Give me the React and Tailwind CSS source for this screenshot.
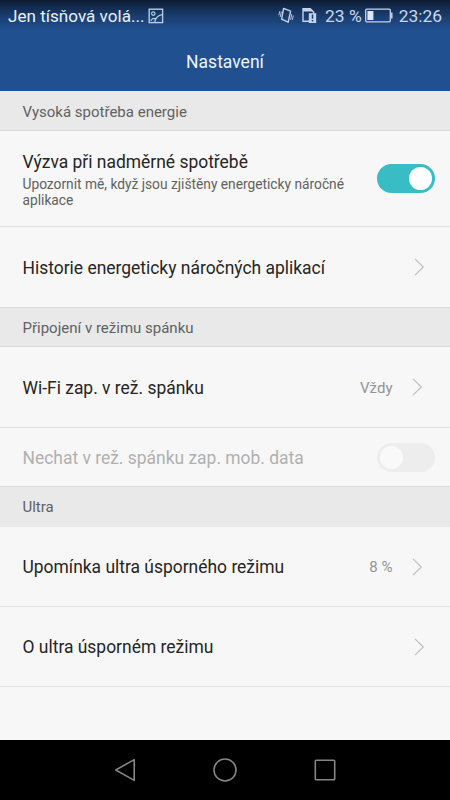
import { useState } from "react";

function Chevron() {
  return (
    <svg width="12" height="20" viewBox="0 0 12 20" fill="none" stroke="#bcbcbc" strokeWidth="1.1">
      <path d="M1 1.8 L9.3 10 L1 18.2" />
    </svg>
  );
}

function Toggle({ on, disabled, onClick }) {
  return (
    <button
      onClick={onClick}
      disabled={disabled}
      className={"flex h-[29px] w-[58px] shrink-0 items-center rounded-full " +
        (on ? "justify-end bg-[#37bdc3] px-[3px]" : "justify-start bg-[#ededed] px-[3px]")}
    >
      <span className={"size-[23px] rounded-full " + (on ? "bg-white" : "bg-[#f9f9f9]")}></span>
    </button>
  );
}

function Section({ title, className }) {
  return (
    <div className={"flex shrink-0 items-center border-[#dadada] bg-[#e9e9e9] pl-[22.5px] text-[15px] text-[#616161] " + className}>
      {title}
    </div>
  );
}

// row that opens another screen
function LinkRow({ title, value, className }) {
  return (
    <div className={"flex shrink-0 items-center border-[#e1e1e1] pl-[22.5px] " + className}>
      <span className="flex-grow pt-[2px] text-[17.45px] text-[#252525]">{title}</span>
      {value && <span className="mr-[19.5px] pt-[2px] text-[15px] text-[#949494]">{value}</span>}
      <Chevron />
    </div>
  );
}

function StatusBar() {
  return (
    <div className="flex h-[32px] items-center pl-2 pr-[8px] text-[17.4px] text-[#e8f0fa]">
      <span className="w-[136px] whitespace-nowrap pt-[2px] text-[17.1px]">Jen tísňová volá...</span>
      <svg className="ml-[4px]" width="16" height="16" viewBox="0 0 16 16" fill="none" stroke="#b9cbe4" strokeWidth="1.4">
        <rect x="1.2" y="1.2" width="13.4" height="13.4" />
        <circle cx="5.3" cy="5.6" r="1.7" strokeWidth="1.2" />
        <path d="M3 12.8 C3.8 10.4 6 10 7.8 11 M6.8 14.2 C7.4 10 10 7.4 14.2 6.6" strokeWidth="1.3" />
      </svg>
      <div className="ml-auto flex items-center text-[#c9d8ec]">
        <svg width="16" height="17" viewBox="0 0 16 17" fill="none" stroke="#c3d3e9" strokeWidth="1.4">
          <path d="M5.6 1.4 L12.6 4.2 L10.2 15.2 L3.6 12.2 Z" strokeLinejoin="round" />
          <path d="M3.4 4.6 L2.2 10 M1.8 4.2 L0.8 8.4 M13.8 7.2 L12.6 12.8 M15.3 8.6 L14.4 12.8" strokeWidth="0.9" />
        </svg>
        <svg className="ml-[8px]" width="15" height="17" viewBox="0 0 15 17" fill="none">
          <path d="M7 14.2 H1 V1.8 H8.2 L11.6 5 V7" stroke="#c3d3e9" strokeWidth="1.4" />
          <path d="M1 1.2 H8.4 L11.6 4.6 H1 Z" fill="#c3d3e9" />
          <rect x="6.8" y="6.2" width="7.4" height="9.8" fill="#c3d3e9" />
          <path d="M10.5 7.6 V11.8 M10.5 13 V14.6" stroke="#1d4276" strokeWidth="1.5" />
        </svg>
        <span className="ml-[8px] whitespace-nowrap pt-px">23 %</span>
        <svg className="ml-[3px]" width="28" height="15" viewBox="0 0 28 15" fill="none">
          <rect x="0.7" y="1.2" width="24.6" height="12.6" rx="1" stroke="#c3d3e9" strokeWidth="1.3" />
          <rect x="2.4" y="3" width="6" height="9" fill="#dbe5f3" />
          <path d="M26.8 4.5 V10.5" stroke="#c3d3e9" strokeWidth="1.5" />
        </svg>
        <span className="ml-[6px] pt-px">23:26</span>
      </div>
    </div>
  );
}

function NavBar() {
  return (
    <div className="flex h-[60px] shrink-0 items-center justify-center gap-[76px] bg-black">
      <svg width="24" height="24" viewBox="0 0 24 24" fill="none" stroke="#858585" strokeWidth="1.6" strokeLinejoin="round">
        <path d="M2.8 12 L21.2 1.6 V22.4 Z" />
      </svg>
      <svg width="24" height="24" viewBox="0 0 24 24" fill="none" stroke="#858585" strokeWidth="1.6">
        <circle cx="12" cy="12" r="11" />
      </svg>
      <svg width="24" height="24" viewBox="0 0 24 24" fill="none" stroke="#858585" strokeWidth="1.6">
        <rect x="2.3" y="2.3" width="19.4" height="19.4" rx="0.8" />
      </svg>
    </div>
  );
}

export default function App() {
  const [warn, setWarn] = useState(true);

  return (
    <div className="flex h-[800px] w-[450px] flex-col overflow-hidden bg-[#f7f7f7] font-['Roboto',sans-serif]">
      <header className="h-[91px] shrink-0 bg-[linear-gradient(to_bottom,#0c1b30_0px,#12294a_6px,#1a3d6e_16px,#20508f_30px)]">
        <StatusBar />
        <h1 className="flex h-[59px] items-center justify-center pt-[2px] text-[17.5px] text-[#eef4fb]">Nastavení</h1>
      </header>

      <Section title="Vysoká spotřeba energie" className="h-[40px] border-b pt-[3px]" />
      <div className="flex h-[96px] shrink-0 items-center border-b border-[#e1e1e1] pl-[22.5px] pr-[15px]">
        <div className="flex-grow pt-px">
          <div className="mb-[2px] text-[17.45px] leading-[23px] text-[#252525]">Výzva při nadměrné spotřebě</div>
          <div className="w-[335px] text-[13.75px] leading-[16px] text-[#616161]">
            Upozornit mě, když jsou zjištěny energeticky náročné aplikace
          </div>
        </div>
        <Toggle on={warn} onClick={() => setWarn(!warn)} />
      </div>
      <LinkRow title="Historie energeticky náročných aplikací" className="h-[80px] pr-[24px]" />

      <Section title="Připojení v režimu spánku" className="h-[40px] border-y pt-[2px]" />
      <LinkRow title="Wi-Fi zap. v rež. spánku" value="Vždy" className="h-[81px] border-b pr-[26px]" />
      <div className="flex h-[58px] shrink-0 items-center pl-[22.5px] pr-[15px]">
        <span className="flex-grow pt-[2px] text-[17.45px] text-[#b0b0b0]">Nechat v rež. spánku zap. mob. data</span>
        <Toggle on={false} disabled />
      </div>

      <Section title="Ultra" className="h-[41px] border-t" />
      <LinkRow title="Upomínka ultra úsporného režimu" value="8 %" className="h-[80px] border-b pr-[26px]" />
      <LinkRow title="O ultra úsporném režimu" className="h-[80px] border-b pr-[24px]" />

      <div className="flex-grow"></div>
      <NavBar />
    </div>
  );
}
